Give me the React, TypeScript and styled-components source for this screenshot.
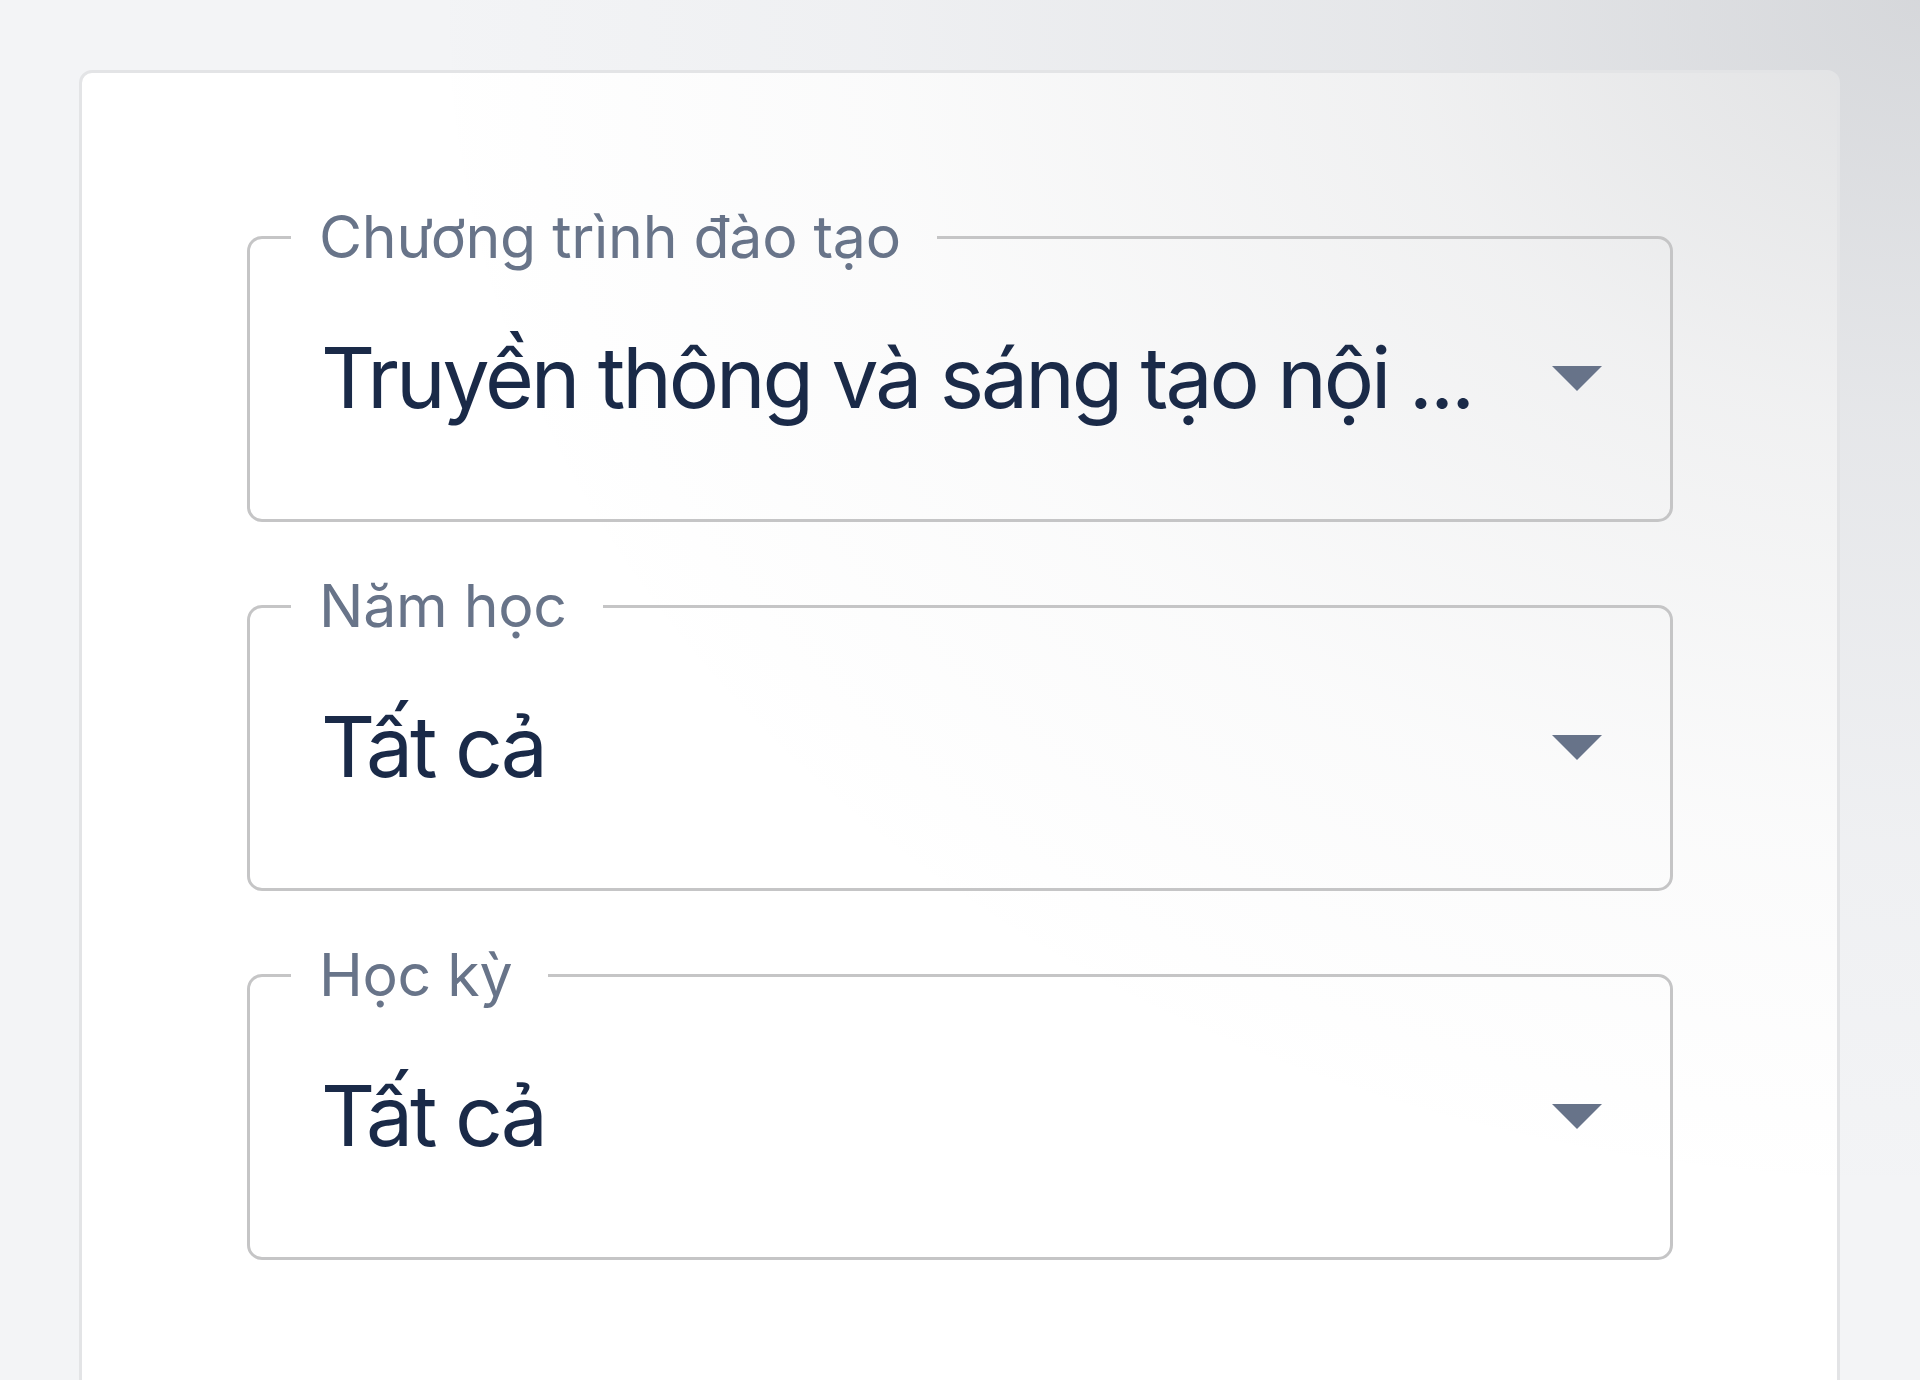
import React from "react"
import styled, { createGlobalStyle } from "styled-components"

// soft shade coming from the top right corner, shared by page and card
const shade = `radial-gradient(ellipse 1500px 1200px at 100% 0%, rgba(110, 114, 122, 0.22) 0%, rgba(110, 114, 122, 0.1) 35%, rgba(110, 114, 122, 0.03) 70%, rgba(110, 114, 122, 0) 100%)`

const GlobalStyle = createGlobalStyle`
    html, body {
        margin: 0;
        padding: 0;
        background: #f3f4f6;
    }
    body {
        font-family: Inter, "Noto Sans", "DejaVu Sans", sans-serif;
    }
`

type Filter = {
    label: string
    value: string
}

const filters: Filter[] = [
    { label: 'Chương trình đào tạo', value: 'Truyền thông và sáng tạo nội ...' },
    { label: 'Năm học', value: 'Tất cả' },
    { label: 'Học kỳ', value: 'Tất cả' },
]

export default function App() {
    return (
        <>
            <GlobalStyle />
            <Page>
                <Card>
                    {filters.map(f => <Select key={f.label} filter={f} />)}
                </Card>
            </Page>
        </>
    )
}

const Select = ({ filter }: { filter: Filter }) => {
    return (
        <Field>
            <Legend>{filter.label}</Legend>
            <SelectRow>
                <SelectValue>{filter.value}</SelectValue>
                <Caret viewBox="0 0 50 25" aria-hidden>
                    <path d="M0 0 H50 L25 25 Z" fill="#677389" />
                </Caret>
            </SelectRow>
        </Field>
    )
}

const Page = styled.div`
    box-sizing: border-box;
    height: 1380px;
    overflow: hidden;
    padding: 70px 80px 0 79px;
    background: ${shade}, #f3f4f6;
    background-attachment: fixed;
`

const Card = styled.div`
    box-sizing: border-box;
    min-height: 1400px;
    border: 3px solid #e3e4e6;
    border-radius: 13px;
    background: ${shade}, #ffffff;
    background-attachment: fixed;
    padding: 131px 164px 0 165px;
    display: flex;
    flex-direction: column;
    gap: 51px;
`

const Field = styled.fieldset`
    margin: 0;
    padding: 0 68px 32px 71px;
    border: 3px solid #c5c5c6;
    border-radius: 15px;
    min-width: 0;
`

const Legend = styled.legend`
    margin-left: -30px;
    padding: 0 36px 0 28px;
    font-size: 59px;
    line-height: 66px;
    color: #687489;
    letter-spacing: -0.3px;
`

const SelectRow = styled.div`
    height: 217px;
    display: flex;
    align-items: center;
    justify-content: space-between;
    gap: 40px;
`

const SelectValue = styled.span`
    font-size: 84px;
    line-height: 1.2;
    color: #1a2a48;
    white-space: nowrap;
    letter-spacing: -3.1px;
`

const Caret = styled.svg`
    width: 50px;
    height: 25px;
    flex: none;
`
